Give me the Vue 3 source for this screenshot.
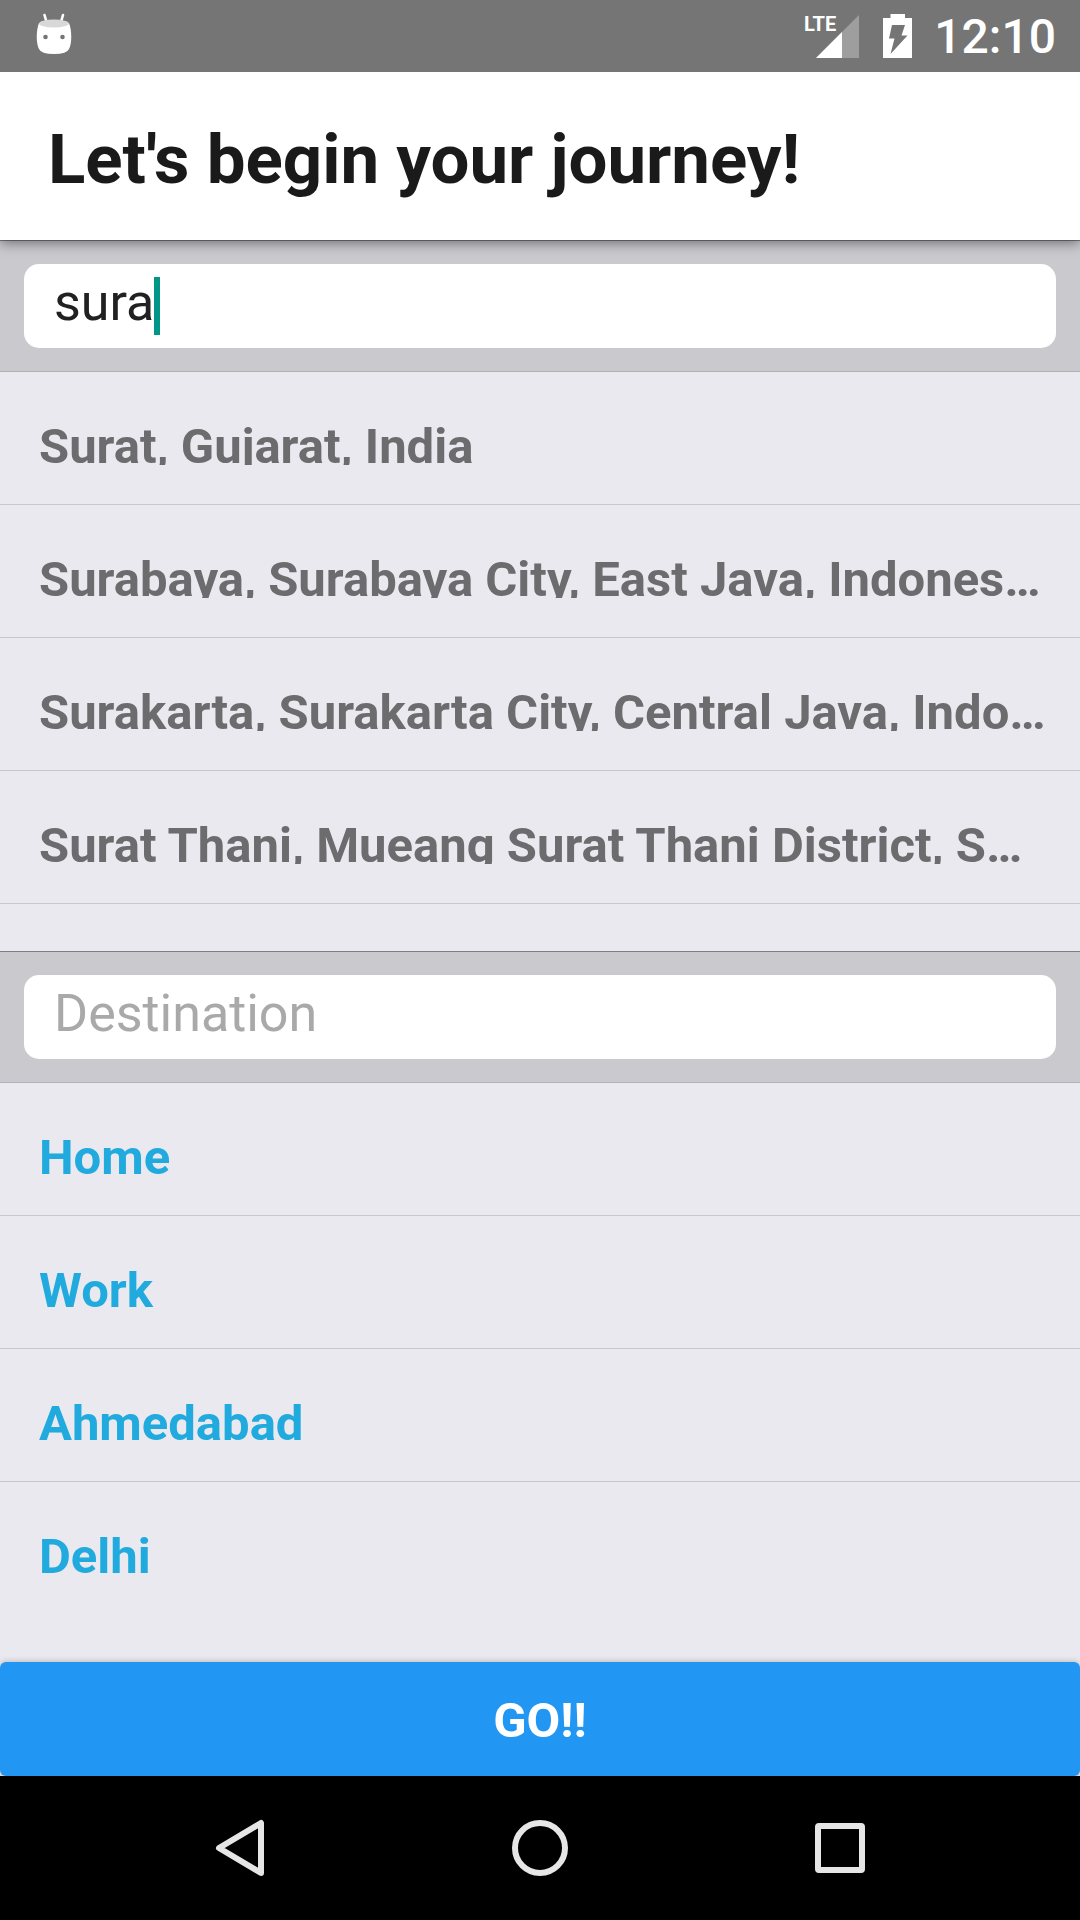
<script setup>
import { ref } from 'vue'

const origin = ref('sura')
const destination = ref('')

const suggestions = [
  'Surat, Gujarat, India',
  'Surabaya, Surabaya City, East Java, Indones…',
  'Surakarta, Surakarta City, Central Java, Indo…',
  'Surat Thani, Mueang Surat Thani District, S…',
]
const favourites = ['Home', 'Work', 'Ahmedabad', 'Delhi']
</script>

<template>
  <div class="screen">
    <div class="status">
      <svg class="droid" width="36" height="44" viewBox="0 0 36 44" aria-hidden="true">
        <path d="M8.500 5 10.500 12M27 5 25 12" stroke="#fff" stroke-width="2.600" stroke-linecap="round" />
        <path d="M3 13C0 20 0 34 3 39Q5 44 18 44Q31 44 33 39C36 34 36 20 33 13Z" fill="#fff" />
        <ellipse cx="18" cy="13.500" rx="15" ry="4" fill="#d8d8d8" />
        <circle cx="9.500" cy="27" r="2.300" fill="#757575" />
        <circle cx="26.500" cy="27" r="2.300" fill="#757575" />
      </svg>
      <div class="indicators">
        <div class="signal">
          <span class="network">LTE</span>
          <svg width="43" height="43" viewBox="0 0 43 43" aria-hidden="true">
            <path d="M0 43 43 0V43Z" fill="#9e9e9e" />
            <path d="M0 43 26 17V43Z" fill="#fff" />
          </svg>
        </div>
        <svg width="29" height="44" viewBox="0 0 29 44" aria-hidden="true">
          <path d="M7.500 0H22V4H29V44H0V4H7.500Z" fill="#fff" />
          <path d="M9 11H22L18.500 21.500H24.500L7.500 40L11.500 24.500H6Z" fill="#757575" />
        </svg>
        <time>12:10</time>
      </div>
    </div>

    <header class="bar">
      <h1>Let's begin your journey!</h1>
    </header>

    <main class="planner">
      <section class="panel">
        <div class="search">
          <div class="field">
            <input v-model="origin" type="text" aria-label="Origin" />
            <span class="caret"></span>
          </div>
        </div>
        <ul class="places results">
          <li v-for="place in suggestions" :key="place">
            <button type="button"><span>{{ place }}</span></button>
          </li>
        </ul>
      </section>

      <section class="panel">
        <div class="search">
          <div class="field">
            <input v-model="destination" type="text" placeholder="Destination" aria-label="Destination" />
          </div>
        </div>
        <ul class="places saved">
          <li v-for="place in favourites" :key="place">
            <button type="button"><span>{{ place }}</span></button>
          </li>
        </ul>
      </section>

      <button class="go" type="button">GO!!</button>
    </main>

    <nav class="system">
      <button type="button" aria-label="Back">
        <svg width="60" height="60" viewBox="0 0 60 60"><path d="M9 30 51 5V55Z" /></svg>
      </button>
      <button type="button" aria-label="Home screen">
        <svg width="60" height="60" viewBox="0 0 60 60"><circle cx="30" cy="30" r="25" /></svg>
      </button>
      <button type="button" aria-label="Recent apps">
        <svg width="60" height="60" viewBox="0 0 60 60"><rect x="8" y="8" width="44" height="44" rx="1" /></svg>
      </button>
    </nav>
  </div>
</template>

<style>
body {
  margin: 0;
}
</style>

<style scoped>
.screen {
  display: flex;
  flex-direction: column;
  min-height: 100vh;
  font-family: Roboto, "Liberation Sans", sans-serif;
  background: #e9e9ef;
}

button,
input {
  margin: 0;
  border: 0;
  font-family: inherit;
  box-sizing: border-box;
}

.status {
  position: relative;
  z-index: 2;
  display: flex;
  align-items: center;
  justify-content: space-between;
  height: 72px;
  padding: 0 24px 0 36px;
  box-sizing: border-box;
  background: #757575;
  color: #fff;
}

.droid {
  margin-bottom: 8px;
}

.indicators {
  display: flex;
  align-items: center;
  gap: 22px;
}

.signal {
  position: relative;
  display: flex;
  margin-right: 2px;
}

.network {
  position: absolute;
  top: 0;
  right: 23px;
  font-size: 20px;
  line-height: 18px;
  font-weight: 700;
}

time {
  padding-top: 2px;
  font-size: 48px;
  line-height: 70px;
  font-weight: 500;
}

.bar {
  position: relative;
  z-index: 1;
  display: flex;
  align-items: center;
  height: 168px;
  padding: 8px 48px 0;
  box-sizing: border-box;
  background: #fff;
  box-shadow: 0 3px 12px rgba(0, 0, 0, 0.45);
}

h1 {
  margin: 0;
  font-size: 69px;
  line-height: 84px;
  font-weight: 700;
  color: #1a1a1a;
}

.planner {
  display: flex;
  flex: 1;
  flex-direction: column;
}

.panel {
  display: flex;
  flex: 1 1 0;
  flex-direction: column;
}

.search {
  padding: 23px 24px;
  border-top: 1px solid #7e7e82;
  border-bottom: 1px solid #b2b2b4;
  background: #c9c9ce;
}

.field {
  position: relative;
  display: flex;
}

input {
  width: 100%;
  height: 84px;
  padding: 0 30px 8px;
  border-radius: 15px;
  outline: none;
  background: #fff;
  color: #212121;
  font-size: 52px;
}

input::placeholder {
  color: #a9a9a9;
  opacity: 1;
}

.caret {
  position: absolute;
  top: 13px;
  left: 130px;
  width: 6px;
  height: 58px;
  background: #009688;
}

.places {
  flex: 1;
  margin: 0;
  padding: 0;
  list-style: none;
}

.places li {
  border-bottom: 1px solid #c8c7cc;
}

.saved li:last-child {
  border-bottom: 0;
}

.places button {
  display: block;
  width: 100%;
  padding: 39px 30px 39px 39px;
  background: none;
  text-align: left;
  color: #6c6c6e;
  font-size: 49px;
  font-weight: 700;
}

.places span {
  display: block;
  height: 54px;
  overflow: hidden;
  line-height: 72px;
  white-space: nowrap;
  text-overflow: ellipsis;
}

.saved button {
  color: #20aadd;
}

.go {
  height: 114px;
  padding: 3px 0 0;
  border-radius: 6px;
  background: #2196f3;
  box-shadow: 0 0 6px rgba(0, 0, 0, 0.25);
  color: #fff;
  font-size: 49px;
  font-weight: 700;
}

.system {
  position: relative;
  display: flex;
  height: 144px;
  padding: 0 90px;
  background: #000;
}

.system button {
  display: flex;
  flex: 1;
  align-items: center;
  justify-content: center;
  padding: 0;
  background: none;
}

.system svg {
  fill: none;
  stroke: #e6e6e6;
  stroke-width: 6;
  stroke-linejoin: round;
}
</style>
